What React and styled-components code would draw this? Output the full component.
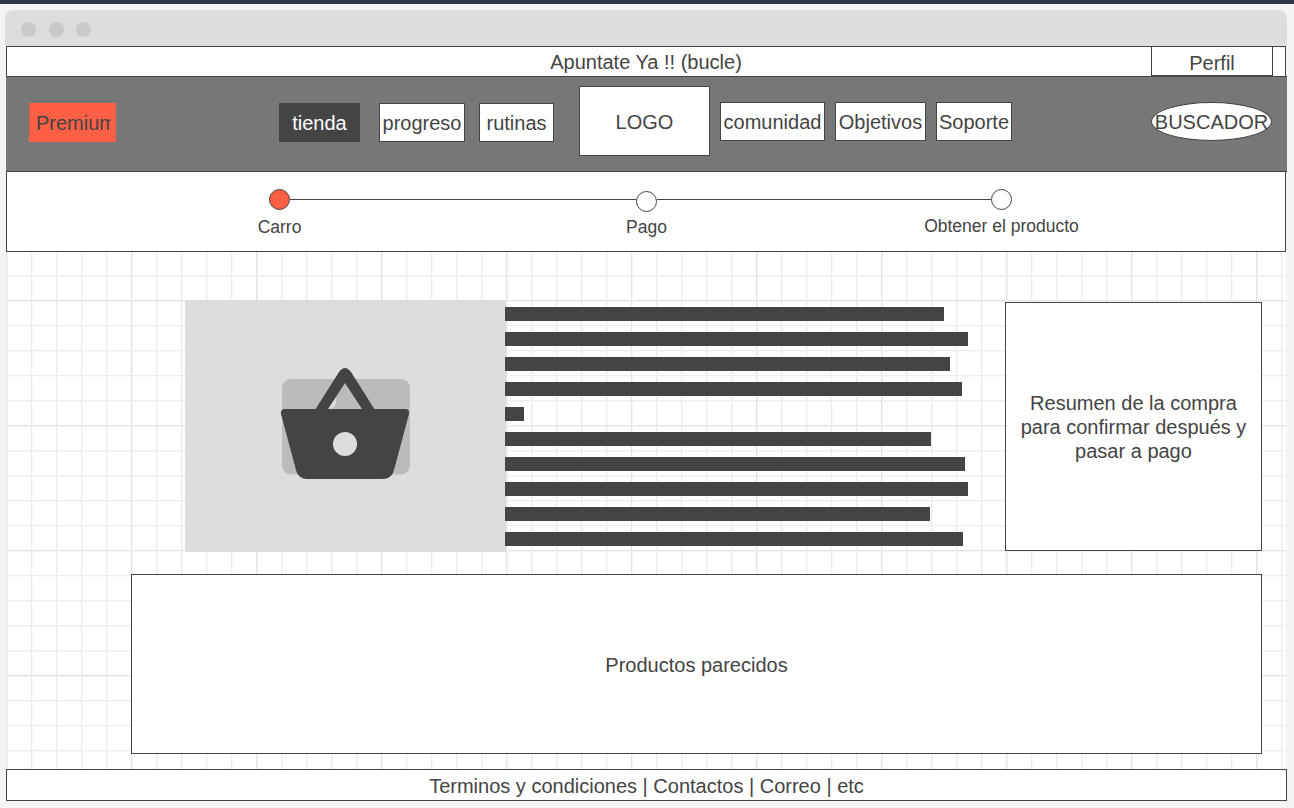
import React from "react";
import styled, { createGlobalStyle } from "styled-components";

const Global = createGlobalStyle`
  html, body { margin: 0; padding: 0; background: #f4f4f4; }
  body { font-family: "Liberation Sans", Arial, sans-serif; color: #444; }
  * { box-sizing: border-box; }
`;
const Page = styled.div`
  width: 1294px; height: 808px; overflow: hidden;
  border-top: 4px solid #2d3646;
  padding: 6px 7px 0 5px;
`;
const Chrome = styled.div`
  height: 36px; width: 1282px; background: #ddd;
  border-radius: 8px 8px 0 0;
  display: flex; align-items: center; gap: 12.5px; padding: 3px 0 0 16px;
`;
const Dot = styled.span`
  width: 15px; height: 15px; border-radius: 50%; background: #c9c9c9;
`;
const Body = styled.div`
  padding-left: 1px; display: flex; flex-direction: column;
`;
const TitleRow = styled.header`
  width: 1280px; height: 30px; background: #fff;
  border: 1px solid #444; border-bottom: 0;
  display: grid; grid-template-columns: 1fr auto 1fr; font-size: 20px;
`;
const TitleText = styled.div`
  grid-column: 2; line-height: 30px;
`;
const Perfil = styled.div`
  grid-column: 3; justify-self: end; width: 122px; height: 30px; margin: -1px 12px 0 0;
  border: 1px solid #444; text-align: center; line-height: 30px; padding-top: 1px;
`;
const Nav = styled.nav`
  width: 1281px; height: 96px; background: #777;
  border-top: 1px solid #444; border-bottom: 1px solid #444;
  display: flex; align-items: flex-start; font-size: 20px;
`;
const NavItem = styled.div`
  flex: none; width: ${p => p.$w}px; height: ${p => p.$h || 39}px;
  margin-left: ${p => p.$ml}px; margin-top: ${p => p.$mt}px;
  padding-top: 2px;
  background: #fff; border: 1px solid #444;
  display: flex; align-items: center; justify-content: center; white-space: nowrap;
`;
const Premium = styled.div`
  flex: none; width: 87px; height: 39px; margin: 26px 0 0 23px;
  background: #ff5f44; padding: 1px 5px 0 7px; line-height: 39px;
`;
const PremiumClip = styled.span`
  display: block; overflow: hidden; white-space: nowrap;
`;
const ActiveTab = styled(NavItem)`
  background: #444; color: #fff; border: 0;
`;
const Search = styled(NavItem)`
  border-radius: 50%;
`;
const Steps = styled.section`
  width: 1280px; height: 80px; background: #fff;
  border: 1px solid #444; border-top: 0;
  display: flex; align-items: flex-start; padding-left: 262px; font-size: 17.5px;
`;
const Step = styled.div`
  flex: none; width: 21px; display: flex; flex-direction: column; align-items: center;
  margin-top: ${p => p.$mt}px;
`;
const Bullet = styled.span`
  width: 21px; height: 21px; border-radius: 50%; border: 1px solid #444;
  background: ${p => (p.$on ? "#ff5f44" : "#fff")};
`;
const StepLabel = styled.span`
  white-space: nowrap; margin-top: ${p => p.$mt}px; line-height: 20px;
`;
const Connector = styled.span`
  flex: none; width: ${p => p.$w}px; height: 1px; background: #444; margin-top: 27px;
`;
const Canvas = styled.main`
  width: 1280px; height: 517px; padding: 48px 24px 0 0;
  background-color: #fff;
  background-image:
    linear-gradient(to right, #e4e4e4 1px, #f4f4f4 1px, #f4f4f4 2px, transparent 2px),
    linear-gradient(to bottom, #e4e4e4 1px, #f4f4f4 1px, #f4f4f4 2px, transparent 2px),
    linear-gradient(to right, #ececec 1px, #f8f8f8 1px, #f8f8f8 2px, transparent 2px),
    linear-gradient(to bottom, #ececec 1px, #f8f8f8 1px, #f8f8f8 2px, transparent 2px);
  background-size: 125px 125px, 125px 125px, 25px 25px, 25px 25px;
  background-position: 0 0, 0 48px, 0 0, 0 23px;
`;
const ProductRow = styled.div`
  display: flex; align-items: flex-start; margin-left: 179px; height: 252px;
`;
const Picture = styled.div`
  flex: none; width: 321px; height: 252px; background: #ddd;
  display: flex; justify-content: center; padding-top: 64px;
`;
const Lines = styled.div`
  flex: none; width: 500px; margin-left: -1px; padding-top: 7px;
  display: flex; flex-direction: column; gap: 11px; position: relative;
`;
const Line = styled.div`
  height: 14px; background: #444; width: ${p => p.$w}px;
`;
const Box = styled.div`
  background: #fff; border: 1px solid #444; color: #444;
  display: flex; align-items: center; justify-content: center; text-align: center;
`;
const Summary = styled(Box)`
  width: 257px; height: 249px; margin: 2px 0 0 auto;
  font-size: 20px; line-height: 24px; padding: 0 12px;
`;
const Similar = styled(Box)`
  height: 180px; margin: 22px 0 0 125px; font-size: 20px; padding-top: 3px;
`;
const Footer = styled.footer`
  width: 1281px; height: 32px; background: #fff; border: 1px solid #444; padding-top: 2px;
  display: flex; align-items: center; justify-content: center; font-size: 20px; line-height: 28px;
`;

const Basket = () => (
  <svg width="136" height="120" viewBox="278 364 136 120">
    <rect x="282" y="379" width="128" height="95.5" rx="9" fill="#bbb" />
    <path d="M328 409 L336 397 C337.5 402 335 407 331 409 Z" fill="#ddd" />
    <path fillRule="evenodd" d="M315 410 L339 372 Q345 364 351 372 L375 410 Z M328 409 H362 L345 383 Z" fill="#444" />
    <path d="M285 409 H405 C408 409 409.5 411 409 414 L394 470 C392.5 476 388 479 383 479 H307 C302 479 297.5 476 296 470 L281 414 C280.5 411 282 409 285 409 Z" fill="#444" />
    <circle cx="345" cy="444" r="12" fill="#ddd" />
  </svg>
);

const widths = [439, 463, 445, 457, 19, 426, 460, 463, 425, 458];

export default function App() {
  return (
    <>
      <Global />
      <Page>
        <Chrome>
          <Dot /><Dot /><Dot />
        </Chrome>
        <Body>
          <TitleRow>
            <TitleText>Apuntate Ya !! (bucle)</TitleText>
            <Perfil>Perfil</Perfil>
          </TitleRow>
          <Nav>
            <Premium><PremiumClip>Premium</PremiumClip></Premium>
            <ActiveTab $w={81} $ml={163} $mt={26}>tienda</ActiveTab>
            <NavItem $w={86} $ml={19} $mt={26}>progreso</NavItem>
            <NavItem $w={75} $ml={14} $mt={26}>rutinas</NavItem>
            <NavItem $w={131} $h={70} $ml={25} $mt={9}>LOGO</NavItem>
            <NavItem $w={105} $ml={10} $mt={25}>comunidad</NavItem>
            <NavItem $w={91} $ml={10} $mt={25}>Objetivos</NavItem>
            <NavItem $w={76} $ml={10} $mt={25}>Soporte</NavItem>
            <Search $w={121} $ml={139} $mt={25}>BUSCADOR</Search>
          </Nav>
          <Steps>
            <Step $mt={17}><Bullet $on /><StepLabel $mt={7}>Carro</StepLabel></Step>
            <Connector $w={346} />
            <Step $mt={19}><Bullet /><StepLabel $mt={5}>Pago</StepLabel></Step>
            <Connector $w={334} />
            <Step $mt={17}><Bullet /><StepLabel $mt={6}>Obtener el producto</StepLabel></Step>
          </Steps>
          <Canvas>
            <ProductRow>
              <Picture><Basket /></Picture>
              <Lines>
                {widths.map((w, i) => <Line key={i} $w={w} />)}
              </Lines>
              <Summary>Resumen de la compra para confirmar después y pasar a pago</Summary>
            </ProductRow>
            <Similar>Productos parecidos</Similar>
          </Canvas>
          <Footer>Terminos y condiciones | Contactos | Correo | etc</Footer>
        </Body>
      </Page>
    </>
  );
}
